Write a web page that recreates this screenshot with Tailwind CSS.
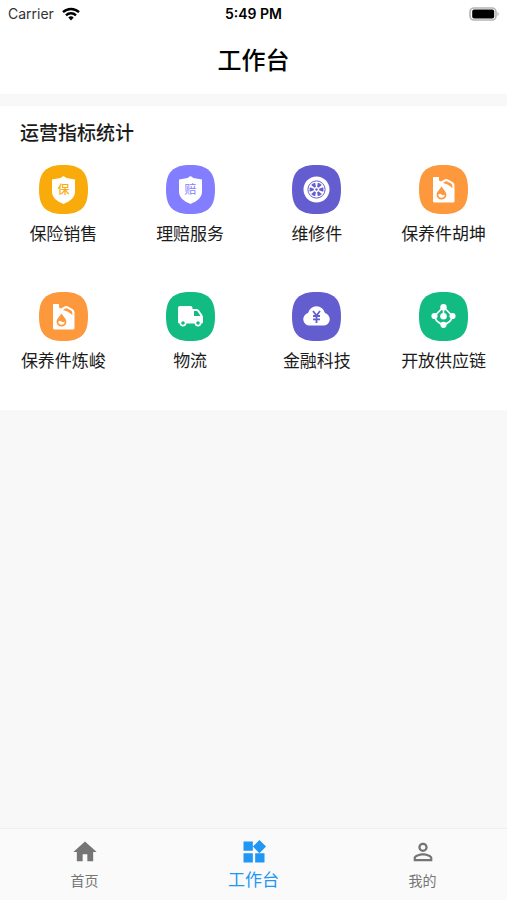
<!DOCTYPE html>
<html lang="zh-CN">

<head>
    <meta charset="UTF-8">
    <meta name="viewport" content="width=device-width, initial-scale=1.0">
    <title>工作台</title>
    <script src="https://cdn.jsdelivr.net/npm/@tailwindcss/browser@4"></script>
</head>

<body class="flex min-h-screen flex-col bg-[#f8f8f8] font-['Roboto','Noto_Sans_CJK_SC',sans-serif] text-[#1c1c1c]">
    <!-- Header -->
    <header class="bg-white">
        <!-- Status bar -->
        <div class="grid h-7 grid-cols-3 items-center px-2 font-['Inter','Liberation_Sans',sans-serif] text-sm text-black">
            <div class="flex items-center gap-2 text-[#333]">
                <span>Carrier</span>
                <svg class="h-[14px] w-[18px]" viewBox="0 0 18 14" fill="none" stroke="#000" stroke-width="2.4">
                    <path d="M1 5.2a11.5 11.5 0 0 1 16 0" />
                    <path d="M4 8.3a7.2 7.2 0 0 1 10 0" />
                    <path d="M6.3 10.6a3.9 3.9 0 0 1 5.4 0L9 13.6z" fill="#000" stroke="none" />
                </svg>
            </div>
            <div class="text-center font-semibold">5:49 PM</div>
            <svg class="h-[14px] w-[30px] justify-self-end" viewBox="0 0 30 14">
                <rect x="1" y="1" width="26" height="12" rx="4" fill="#fff" stroke="#b4b4b4" stroke-width="1.6" />
                <rect x="3.2" y="2.6" width="22" height="8.8" rx="2" fill="#000" />
                <path d="M28.5 5a2.3 2.3 0 0 1 0 4z" fill="#aaa" />
            </svg>
        </div>
        <h1 class="flex h-[66px] items-center justify-center text-2xl font-medium text-black">工作台</h1>
    </header>

    <!-- Business entries -->
    <main class="flex-1 pt-3">
        <section class="bg-white pt-3 pb-[35px]">
            <h2 class="pl-5 text-[19px] leading-8 font-medium">运营指标统计</h2>
            <div class="grid grid-cols-4 gap-y-11 pt-[15px] text-[17px] leading-7">
                <a href="#" class="flex flex-col items-center gap-1.5">
                    <svg class="size-[49px]" viewBox="0 0 49 49">
                        <path d="M24.5 0C42 0 49 7 49 24.5S42 49 24.5 49 0 42 0 24.5 7 0 24.5 0z" fill="#faab0c" />
                        <path d="M24.5 11l3 2 8.5 1.5v12c0 6-4.500 9.500-11.500 12.500C17.500 36 13 32.500 13 26.500v-12l8.500-1.500z" fill="#fff" />
                        <text x="24.500" y="29" text-anchor="middle" font-size="12" font-weight="500" fill="#faab0c">保</text>
                    </svg>
                    <span>保险销售</span>
                </a>
                <a href="#" class="flex flex-col items-center gap-1.5">
                    <svg class="size-[49px]" viewBox="0 0 49 49">
                        <path d="M24.5 0C42 0 49 7 49 24.5S42 49 24.5 49 0 42 0 24.5 7 0 24.5 0z" fill="#837dff" />
                        <path d="M24.5 11l3 2 8.5 1.5v12c0 6-4.500 9.500-11.500 12.500C17.500 36 13 32.500 13 26.500v-12l8.500-1.500z" fill="#fff" />
                        <text x="24.500" y="29" text-anchor="middle" font-size="12" fill="#837dff">赔</text>
                    </svg>
                    <span>理赔服务</span>
                </a>
                <a href="#" class="flex flex-col items-center gap-1.5">
                    <svg class="size-[49px]" viewBox="0 0 49 49">
                        <path d="M24.5 0C42 0 49 7 49 24.5S42 49 24.5 49 0 42 0 24.5 7 0 24.5 0z" fill="#645dd0" />
                        <circle cx="24.500" cy="24.500" r="13" fill="#fff" />
                        <circle cx="24.500" cy="24.500" r="8.600" fill="none" stroke="#645dd0" stroke-width="1" />
                        <g fill="#645dd0">
                            <circle cx="24.500" cy="24.500" r="1.200" />
                            <path id="spoke" d="M22.200 17.900a7 7 0 0 1 4.600 0l-1.500 4h-1.600z" transform="rotate(30 24.500 24.500)" />
                            <use href="#spoke" transform="rotate(60 24.500 24.500)" />
                            <use href="#spoke" transform="rotate(120 24.500 24.500)" />
                            <use href="#spoke" transform="rotate(180 24.500 24.500)" />
                            <use href="#spoke" transform="rotate(240 24.500 24.500)" />
                            <use href="#spoke" transform="rotate(300 24.500 24.500)" />
                        </g>
                    </svg>
                    <span>维修件</span>
                </a>
                <a href="#" class="flex flex-col items-center gap-1.5">
                    <svg class="size-[49px]" viewBox="0 0 49 49">
                        <path d="M24.5 0C42 0 49 7 49 24.5S42 49 24.5 49 0 42 0 24.5 7 0 24.5 0z" fill="#fd983d" />
                        <g id="oil">
                            <path d="M14 12h6v3.500l2 1 3.500-2q1.500-.8 3-.2l5 2.700q2 1.200 2 3.500V36q0 1.500-1.500 1.500h-18.500Q14 37.500 14 36z" fill="#fff" />
                            <path d="M24 18l2.300-1.400q1-.5 2 0l3.700 2q1.300.8 1.300 2.200v2.400l-2-2q-3-2.200-7.300-3.200z" fill="#fd983d" />
                            <path d="M22.500 21.500c2.400 3.800 4.900 5.600 4.900 8.200a4.900 4.900 0 0 1-9.800 0c0-2.600 2.500-4.400 4.900-8.200z" fill="#fd983d" />
                            <path d="M19.300 29.500q1.700-1.300 3.200 0t3.200 0a3.200 3.200 0 0 1-6.400 0z" fill="#fff" />
                        </g>
                    </svg>
                    <span>保养件胡坤</span>
                </a>
                <a href="#" class="flex flex-col items-center gap-1.5">
                    <svg class="size-[49px]" viewBox="0 0 49 49">
                        <path d="M24.5 0C42 0 49 7 49 24.5S42 49 24.5 49 0 42 0 24.5 7 0 24.5 0z" fill="#fd983d" />
                        <use href="#oil" />
                    </svg>
                    <span>保养件炼峻</span>
                </a>
                <a href="#" class="flex flex-col items-center gap-1.5">
                    <svg class="size-[49px]" viewBox="0 0 49 49">
                        <path d="M24.5 0C42 0 49 7 49 24.5S42 49 24.5 49 0 42 0 24.5 7 0 24.5 0z" fill="#12bb82" />
                        <path d="M14 14h10.500q2 0 2 2v1h4q1.500 0 2.500 1.200l3 4.300q1 1.300 1 3V30q0 1.500-1.500 1.500h-22Q12 31.500 12 30V16q0-2 2-2z" fill="#fff" />
                        <path d="M28 19h2.500q.8 0 1.300.8l2.700 4.200H28z" fill="#12bb82" />
                        <g fill="#12bb82" stroke="#fff" stroke-width="1.600">
                            <circle cx="17" cy="31" r="2.600" />
                            <circle cx="32" cy="31" r="2.600" />
                        </g>
                    </svg>
                    <span>物流</span>
                </a>
                <a href="#" class="flex flex-col items-center gap-1.5">
                    <svg class="size-[49px]" viewBox="0 0 49 49">
                        <path d="M24.5 0C42 0 49 7 49 24.5S42 49 24.5 49 0 42 0 24.5 7 0 24.5 0z" fill="#645dd0" />
                        <path d="M17.500 33.500a6.300 6.300 0 0 1-1.500-12.400 8.700 8.700 0 0 1 17 0 6.300 6.300 0 0 1-1.500 12.400z" fill="#fff" />
                        <path d="M21 19l3.500 4.500L28 19M21 24h7M21 27.300h7M24.500 23.500V31" fill="none" stroke="#645dd0" stroke-width="1.800" />
                    </svg>
                    <span>金融科技</span>
                </a>
                <a href="#" class="flex flex-col items-center gap-1.5">
                    <svg class="size-[49px]" viewBox="0 0 49 49">
                        <path d="M24.5 0C42 0 49 7 49 24.5S42 49 24.5 49 0 42 0 24.5 7 0 24.5 0z" fill="#12bb82" />
                        <path d="M24.500 15L33.500 24Q32 31 24.500 32.500 17 31 15.500 24z" fill="none" stroke="#fff" stroke-width="1.600" />
                        <circle cx="24.500" cy="24.300" r="4.600" fill="#12bb82" />
                        <path d="M24.500 15v9" stroke="#fff" stroke-width="1.600" />
                        <g fill="#fff">
                            <circle cx="24.500" cy="15.300" r="3.200" />
                            <circle cx="15.500" cy="24" r="3.100" />
                            <circle cx="33.500" cy="24" r="3.100" />
                            <circle cx="24.500" cy="32.800" r="3.100" />
                            <circle cx="24.500" cy="24.300" r="3.300" />
                        </g>
                    </svg>
                    <span>开放供应链</span>
                </a>
            </div>
        </section>
    </main>

    <!-- Bottom tabs -->
    <nav class="grid h-[72px] grid-cols-3 border-t border-[#efefef] bg-[#fafafa] pt-[9px] text-sm leading-[30px] text-[#757575]">
        <a href="#" class="flex flex-col items-center">
            <svg class="size-7" viewBox="0 0 24 24" fill="currentColor">
                <path d="M10 20v-6h4v6h5v-8h3L12 3 2 12h3v8z" />
            </svg>
            <span>首页</span>
        </a>
        <a href="#" class="flex flex-col items-center text-[17px] leading-7 text-[#2196f3]" aria-current="page">
            <svg class="size-7" viewBox="0 0 24 24" fill="currentColor">
                <path d="M13 13v8h8v-8h-8zM3 21h8v-8H3v8zM3 3v8h8V3H3zm13.660-1.310L11 7.340 16.660 13l5.660-5.660-5.660-5.650z" />
            </svg>
            <span>工作台</span>
        </a>
        <a href="#" class="flex flex-col items-center">
            <svg class="size-7" viewBox="0 0 24 24" fill="currentColor">
                <path d="M12 5.900a2.100 2.100 0 1 1 0 4.200 2.100 2.100 0 0 1 0-4.200m0 9c2.970 0 6.100 1.460 6.100 2.100v1.100H5.900V17c0-.64 3.130-2.100 6.100-2.100M12 4C9.790 4 8 5.790 8 8s1.790 4 4 4 4-1.790 4-4-1.790-4-4-4zm0 9c-2.670 0-8 1.340-8 4v3h16v-3c0-2.660-5.330-4-8-4z" />
            </svg>
            <span>我的</span>
        </a>
    </nav>
</body>

</html>
